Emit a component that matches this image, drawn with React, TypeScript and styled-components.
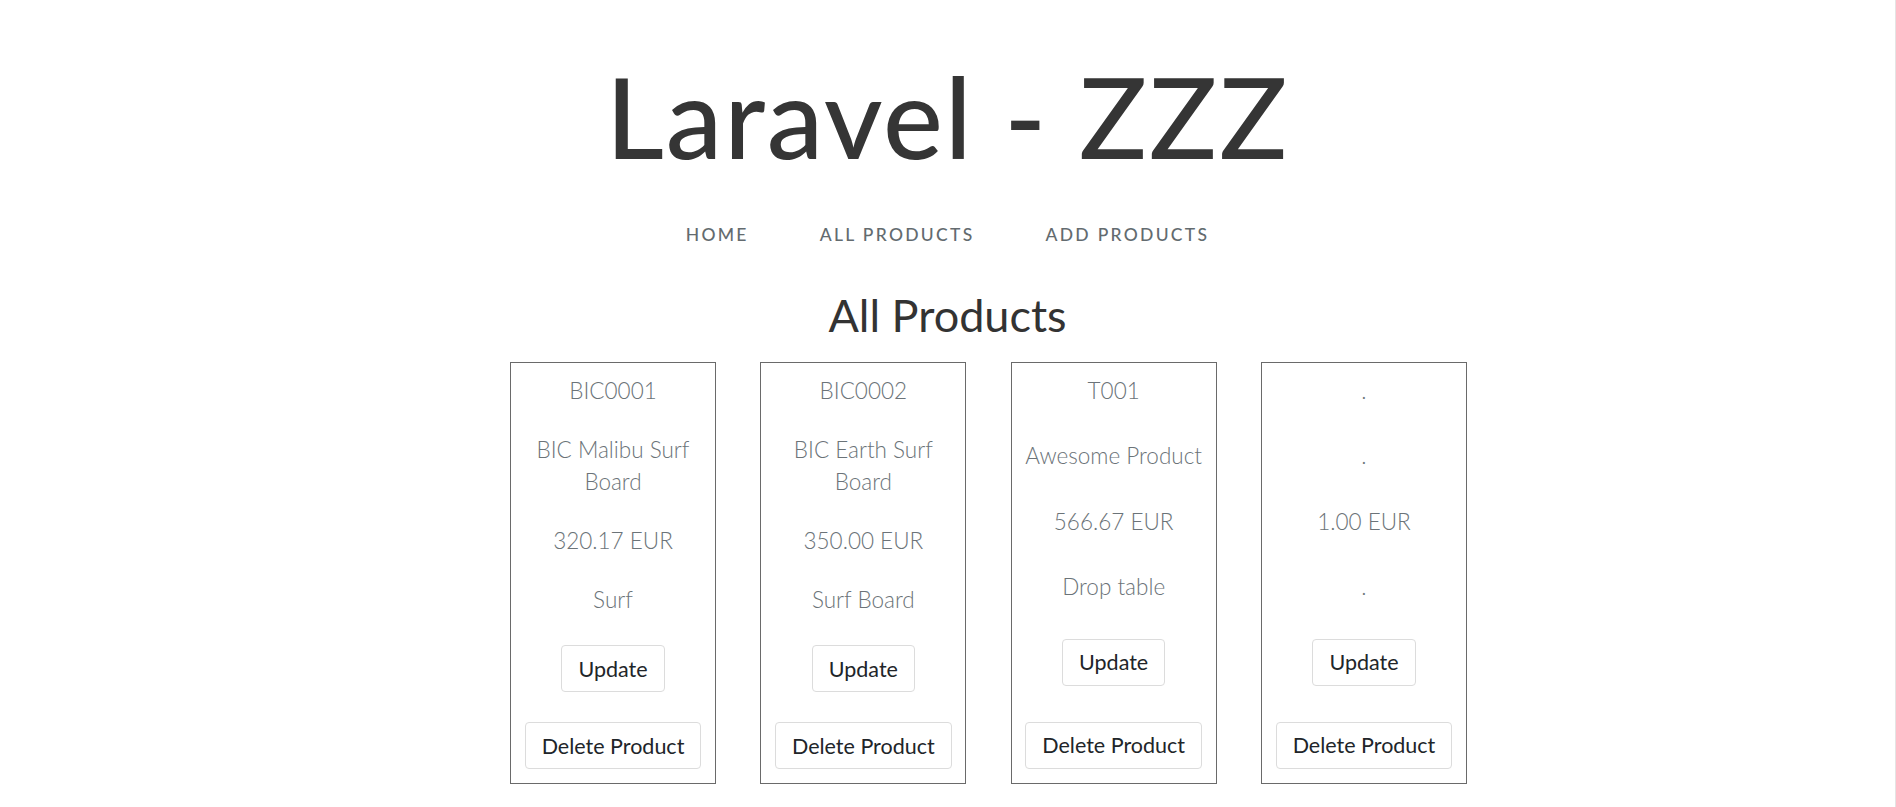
import React from "react";
import styled, { createGlobalStyle } from "styled-components";

const GlobalStyle = createGlobalStyle`
  html, body {
    margin: 0;
    padding: 0;
    background: #ffffff;
  }
  body {
    font-family: Lato, "Open Sans", "Liberation Sans", sans-serif;
    color: #212529;
  }
  * { box-sizing: border-box; }
`;

const Page = styled.div`
  min-height: 100vh;
  border-right: 1px solid #e4e4e4;
  display: flex;
  flex-direction: column;
  align-items: center;
  overflow: hidden;
`;

const Title = styled.h1`
  margin: 59px 0 0;
  font-size: 113px;
  line-height: 113px;
  font-weight: 500;
  letter-spacing: 2px;
  color: #353535;
  text-align: center;
`;

const Nav = styled.nav`
  margin-top: 51px;
  display: flex;
  justify-content: center;
  gap: 71px;
`;

const NavLink = styled.a`
  font-size: 17.5px;
  line-height: 24px;
  font-weight: 500;
  letter-spacing: 2.3px;
  text-transform: uppercase;
  color: #636b6f;
  text-decoration: none;
`;

const Heading = styled.h2`
  margin: 41px 0 0;
  font-size: 45px;
  line-height: 54px;
  font-weight: 400;
  color: #333333;
`;

const CardRow = styled.div`
  margin-top: 20px;
  align-self: stretch;
  display: flex;
  justify-content: center;
  align-items: stretch;
  gap: 44.33px;
  padding-left: 82px;
`;

const Card = styled.div`
  width: 206px;
  border: 1px solid #6a6a6a;
  padding: 12px 8px 14px;
  display: flex;
  flex-direction: column;
  align-items: center;
  justify-content: space-between;
  gap: 27px;
`;

const Field = styled.p`
  margin: 0;
  font-size: 22.5px;
  line-height: 32px;
  font-weight: 300;
  color: #6b7378;
  text-align: center;
`;

const Button = styled.button<{ $gapAbove?: number }>`
  margin-top: ${(p) => p.$gapAbove ?? 0}px;
  height: 47px;
  padding: 0 16px;
  background: #ffffff;
  border: 1px solid #dcdcdc;
  border-radius: 4px;
  font-family: Lato, "Open Sans", "Liberation Sans", sans-serif;
  font-size: 21.5px;
  font-weight: 400;
  color: #212529;
  cursor: pointer;
`;

type Product = {
  code: string;
  name: string;
  price: string;
  category: string;
};

const products: Product[] = [
  { code: "BIC0001", name: "BIC Malibu Surf Board", price: "320.17 EUR", category: "Surf" },
  { code: "BIC0002", name: "BIC Earth Surf Board", price: "350.00 EUR", category: "Surf Board" },
  { code: "T001", name: "Awesome Product", price: "566.67 EUR", category: "Drop table" },
  { code: ".", name: ".", price: "1.00 EUR", category: "." },
];

export default function App() {
  return (
    <>
      <GlobalStyle />
      <Page>
        <Title>Laravel - ZZZ</Title>
        <Nav>
          <NavLink href="#">Home</NavLink>
          <NavLink href="#">All Products</NavLink>
          <NavLink href="#">Add Products</NavLink>
        </Nav>
        <Heading>All Products</Heading>
        <CardRow>
          {products.map((p, i) => (
            <Card key={i}>
              <Field>{p.code}</Field>
              <Field>{p.name}</Field>
              <Field>{p.price}</Field>
              <Field>{p.category}</Field>
              <Button $gapAbove={2}>Update</Button>
              <Button $gapAbove={3}>Delete Product</Button>
            </Card>
          ))}
        </CardRow>
      </Page>
    </>
  );
}
